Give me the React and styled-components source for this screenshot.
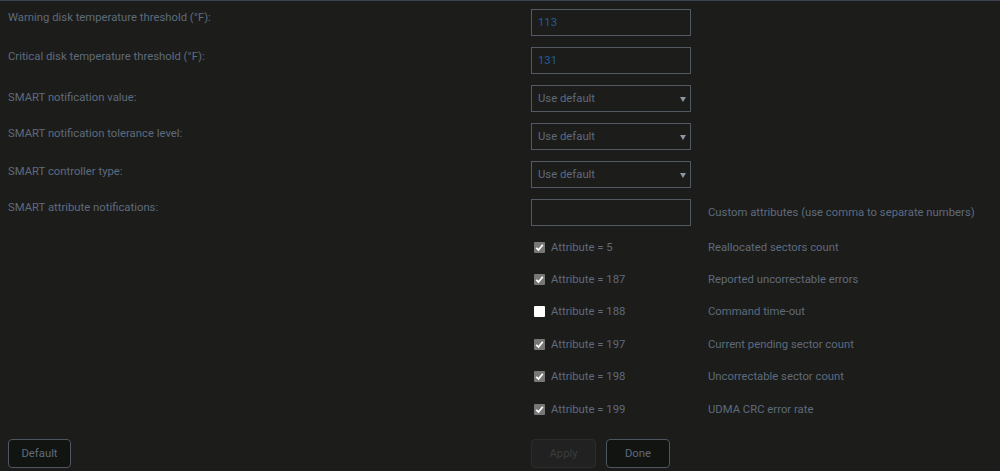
import React from 'react';
import styled, { createGlobalStyle } from 'styled-components';

const Global = createGlobalStyle`
  html, body {
    margin: 0;
    background: #1c1c1b;
  }
  body {
    font-family: Roboto, "Liberation Sans", sans-serif;
    font-size: 11.3px;
    color: #5e6b7b;
  }
`;

const Page = styled.div`
  border-top: 1px solid #3b4350;
  padding: 8px 8px 0 8px;
  height: 470px;
  box-sizing: border-box;
`;

const Form = styled.div`
  display: grid;
  grid-template-columns: 506px 160px 1fr;
  column-gap: 17px;
  row-gap: 11px;
  grid-auto-rows: 27px;
  align-items: center;
`;

const Label = styled.div`
  align-self: start;
  padding-top: ${p => p.$top || 2}px;
  line-height: 14px;
`;

const Field = styled.div`
  height: 27px;
  box-sizing: border-box;
  border: 1px solid #525963;
  background: #1c1c1b;
  display: flex;
  align-items: center;
  padding: 0 6px;
  color: ${p => (p.$value ? '#1f5c9c' : '#5e6b7b')};
  position: relative;
`;

const Arrow = styled.span`
  position: absolute;
  right: 4px;
  top: 11px;
  width: 0;
  height: 0;
  border-left: 3px solid transparent;
  border-right: 3px solid transparent;
  border-top: 5px solid #8d97a3;
`;

const Note = styled.div`
  white-space: nowrap;
`;

const AttrList = styled.div`
  display: grid;
  grid-template-columns: 506px 160px 1fr;
  column-gap: 17px;
  grid-auto-rows: 32.4px;
  align-items: center;
  margin-top: 5px;
`;

const CheckRow = styled.div`
  grid-column: 2;
  display: flex;
  align-items: center;
  gap: 6px;
  padding-left: 3px;
`;

const Box = styled.span`
  width: 11px;
  height: 11px;
  border-radius: 1px;
  background: ${p => (p.$on ? '#777777' : '#ffffff')};
  display: flex;
  align-items: center;
  justify-content: center;
`;

const Footer = styled.div`
  display: grid;
  grid-template-columns: 513px auto 1fr;
  column-gap: 10px;
  margin-top: 14px;
  align-items: start;
`;

const Buttons = styled.div`
  display: flex;
  gap: 10px;
`;

const Button = styled.button`
  height: 29px;
  width: ${p => p.$w || 64}px;
  padding: 0;
  box-sizing: border-box;
  border-radius: 4px;
  border: 1px solid ${p => (p.disabled ? '#2b2c2b' : '#4d5662')};
  background: ${p => (p.disabled ? '#202120' : '#121411')};
  color: ${p => (p.disabled ? '#3b3d3c' : '#5e6b7b')};
  font-family: Roboto, "Liberation Sans", sans-serif;
  font-size: 11.3px;
  cursor: pointer;
`;

const fields = [
  { label: 'Warning disk temperature threshold (°F):', value: '113', top: 2 },
  { label: 'Critical disk temperature threshold (°F):', value: '131', top: 3 },
  { label: 'SMART notification value:', select: 'Use default', top: 6 },
  { label: 'SMART notification tolerance level:', select: 'Use default', top: 4 },
  { label: 'SMART controller type:', select: 'Use default', top: 4 },
  { label: 'SMART attribute notifications:', value: '', note: 'Custom attributes (use comma to separate numbers)', top: 2 },
];

const attrs = [
  { id: 5, on: true, desc: 'Reallocated sectors count' },
  { id: 187, on: true, desc: 'Reported uncorrectable errors' },
  { id: 188, on: false, desc: 'Command time-out' },
  { id: 197, on: true, desc: 'Current pending sector count' },
  { id: 198, on: true, desc: 'Uncorrectable sector count' },
  { id: 199, on: true, desc: 'UDMA CRC error rate' },
];

const Check = () => (
  <svg width="9" height="9" viewBox="0 0 9 9">
    <path d="M1.2 4.8 L3.5 7 L7.8 1.8" fill="none" stroke="#fff" strokeWidth="1.8" />
  </svg>
);

export default function App() {
  return (
    <Page>
      <Global />
      <Form>
        {fields.map(f => (
          <React.Fragment key={f.label}>
            <Label $top={f.top}>{f.label}</Label>
            <Field $value={!f.select}>
              {f.select || f.value}
              {f.select && <Arrow />}
            </Field>
            <Note>{f.note}</Note>
          </React.Fragment>
        ))}
      </Form>
      <AttrList>
        {attrs.map(a => (
          <React.Fragment key={a.id}>
            <CheckRow>
              <Box $on={a.on}>{a.on && <Check />}</Box>
              Attribute = {a.id}
            </CheckRow>
            <Note>{a.desc}</Note>
          </React.Fragment>
        ))}
      </AttrList>
      <Footer>
        <div><Button $w={63}>Default</Button></div>
        <Buttons>
          <Button disabled $w={65}>Apply</Button>
          <Button>Done</Button>
        </Buttons>
      </Footer>
    </Page>
  );
}
